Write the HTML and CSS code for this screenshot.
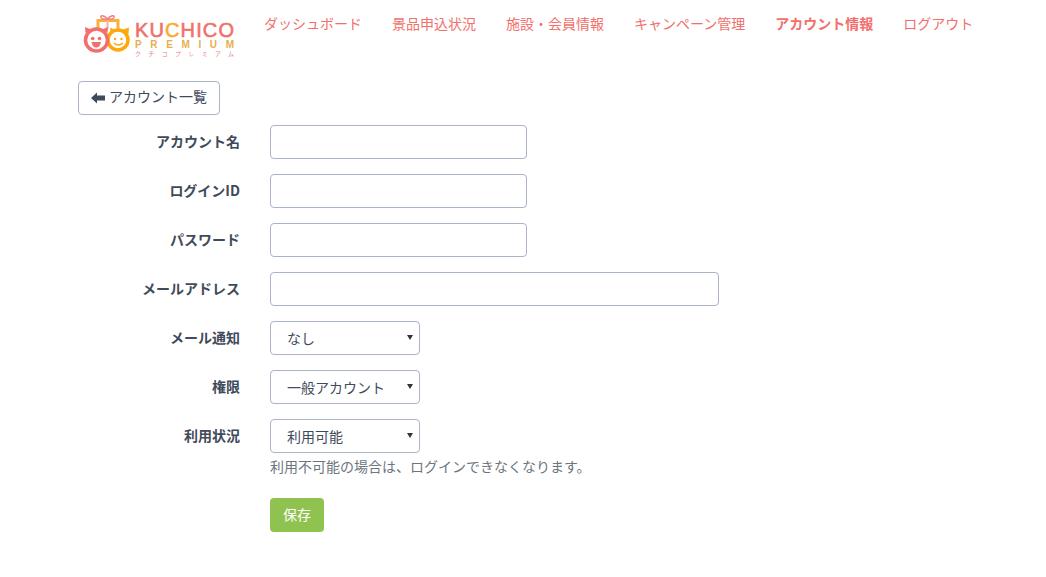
FILE: index.html
```html
<!DOCTYPE html>
<html lang="ja">
<head>
<meta charset="utf-8">
<title>アカウント情報</title>
<link rel="stylesheet" href="styles.css">
</head>
<body>
<header class="header">
  <a class="logo" href="#" aria-label="KUCHICO PREMIUM">
    <svg class="logo-svg" width="156" height="46" viewBox="0 0 156 46">
      <path d="M15 17V8.500H35V17" fill="none" stroke="#fbb03b" stroke-width="3"/>
      <path d="M24.500 7V17" stroke="#f6b3ac" stroke-width="2"/>
      <path d="M24.500 7C21 3 17 3 18 5.500C19 7.500 22 7.500 24.500 7C27 7.500 30 7.500 31 5.500C32 3 28 3 24.500 7Z" fill="none" stroke="#f1807a" stroke-width="1.500"/>
      <path d="M27 21L27.500 15.500L32 18M39 18L46 15.500L45.500 22" fill="#fca90f"/>
      <circle cx="35" cy="28" r="10" fill="#fff" stroke="#fca90f" stroke-width="3.500"/>
      <circle cx="32" cy="27" r="1.200" fill="#fca90f"/>
      <circle cx="38.500" cy="27" r="1.200" fill="#fca90f"/>
      <path d="M31 31Q35 35 40 31" fill="none" stroke="#fca90f" stroke-width="1.500"/>
      <path d="M2.500 21L2 15L8 17.500M19 17.500L25 15L24.500 21" fill="#f26f6b"/>
      <circle cx="13.500" cy="28" r="11" fill="#fff" stroke="#f26f6b" stroke-width="3.500"/>
      <circle cx="9.700" cy="26.500" r="1.800" fill="#f26f6b"/>
      <circle cx="16.500" cy="26.500" r="1.800" fill="#f26f6b"/>
      <path d="M8.500 30H18Q17 35.500 13.200 35.500Q9.500 35.500 8.500 30Z" fill="#f26f6b"/>
      <text class="logo-main" x="52" y="25" textLength="99"><tspan class="coral">KU</tspan><tspan class="amber">C</tspan><tspan class="coral">HICO</tspan></text>
      <text class="logo-sub" x="52" y="36" textLength="99">PREMIUM</text>
      <text class="logo-kana" x="52" y="44" textLength="99">クチコプレミアム</text>
    </svg>
  </a>
  <nav class="nav">
    <a href="#">ダッシュボード</a>
    <a href="#">景品申込状況</a>
    <a href="#">施設・会員情報</a>
    <a href="#">キャンペーン管理</a>
    <a href="#" class="active">アカウント情報</a>
    <a href="#">ログアウト</a>
  </nav>
</header>
<main class="main">
  <a class="back-btn" href="#">
    <svg class="back-icon" width="14" height="12" viewBox="0 0 14 12"><path d="M0 6L6 .5V3.500H14V8.500H6V11.500Z" fill="#3f4a5a"/></svg>
    <span class="back-text">アカウント一覧</span>
  </a>
  <form class="form">
    <div class="row"><label class="label">アカウント名</label><input class="input short" type="text"></div>
    <div class="row"><label class="label">ログインID</label><input class="input short" type="text"></div>
    <div class="row"><label class="label">パスワード</label><input class="input short" type="password"></div>
    <div class="row"><label class="label">メールアドレス</label><input class="input wide" type="text"></div>
    <div class="row"><label class="label">メール通知</label><span class="select-wrap"><select class="select"><option>なし</option></select></span></div>
    <div class="row"><label class="label">権限</label><span class="select-wrap"><select class="select"><option>一般アカウント</option></select></span></div>
    <div class="row status-row"><label class="label">利用状況</label><div class="field"><span class="select-wrap"><select class="select"><option>利用可能</option></select></span><p class="help">利用不可能の場合は、ログインできなくなります。</p></div></div>
    <div class="row actions"><button class="save" type="button">保存</button></div>
  </form>
</main>
</body>
</html>
```
FILE: styles.css
```css
* { box-sizing: border-box; }
html, body { margin: 0; }
body {
  font-family: "Noto Sans CJK JP", "Liberation Sans", sans-serif;
  font-size: 14px;
  color: #3f4a5a;
  background: #fff;
  height: 577px;
  overflow: hidden;
}
a { text-decoration: none; }
.header {
  display: flex;
  align-items: flex-start;
  height: 81px;
  padding-left: 83px;
}
.logo { display: block; margin-top: 12px; width: 156px; height: 46px; }
.logo-svg { display: block; overflow: visible; }
.logo-main { font-family: "Liberation Sans", sans-serif; font-size: 20px; stroke-width: 0.600px; }
.coral { fill: #ef716b; stroke: #ef716b; }
.amber { fill: #fbab2b; stroke: #fbab2b; }
.logo-sub { font-family: "Liberation Sans", sans-serif; font-size: 10px; font-weight: 700; fill: #e5b04c; }
.logo-kana { font-family: "Noto Sans CJK JP", sans-serif; font-size: 6px; fill: #f0817c; }
.nav {
  display: flex;
  gap: 30px;
  margin-left: 25px;
  padding-top: 13px;
  line-height: 21px;
}
.nav a { color: #f26f6b; }
.nav a.active { font-weight: 700; }
.main { padding-left: 78px; }
.back-btn {
  display: inline-flex;
  align-items: center;
  gap: 4px;
  height: 34px;
  padding: 0 12px;
  border: 1px solid #a9b4c4;
  border-radius: 4px;
  color: #3f4a5a;
  background: #fff;
}
.back-icon { display: block; }
.back-text { display: block; line-height: 21px; margin-top: -3px; }
.form { margin-top: 10px; }
.row {
  display: flex;
  align-items: flex-start;
  margin-bottom: 15px;
}
.label {
  width: 162px;
  margin-right: 30px;
  text-align: right;
  font-weight: 700;
  line-height: 21px;
  padding-top: 6px;
}
.input, .select {
  height: 34px;
  border: 1px solid #a9b4c4;
  border-radius: 4px;
  background: #fff;
  font: inherit;
  color: #3f4a5a;
}
.input.short { width: 257px; }
.input.wide { width: 449px; }
.select-wrap { display: block; position: relative; width: 150px; }
.select-wrap::after {
  content: "";
  position: absolute;
  right: 7px;
  top: 14px;
  border-left: 3px solid transparent;
  border-right: 3px solid transparent;
  border-top: 5px solid #333;
  pointer-events: none;
}
.select {
  display: block;
  width: 150px;
  padding: 0 16px;
  appearance: none;
  -webkit-appearance: none;
}
.help { margin: 3px 0 0; line-height: 21px; color: #6c757d; }
.status-row { margin-bottom: 21px; }
.actions { padding-left: 192px; }
.save {
  width: 54px;
  height: 34px;
  border: 0;
  border-radius: 4px;
  background: #8fc24f;
  color: #fff;
  font: inherit;
  padding: 0 0 3px;
}
```
